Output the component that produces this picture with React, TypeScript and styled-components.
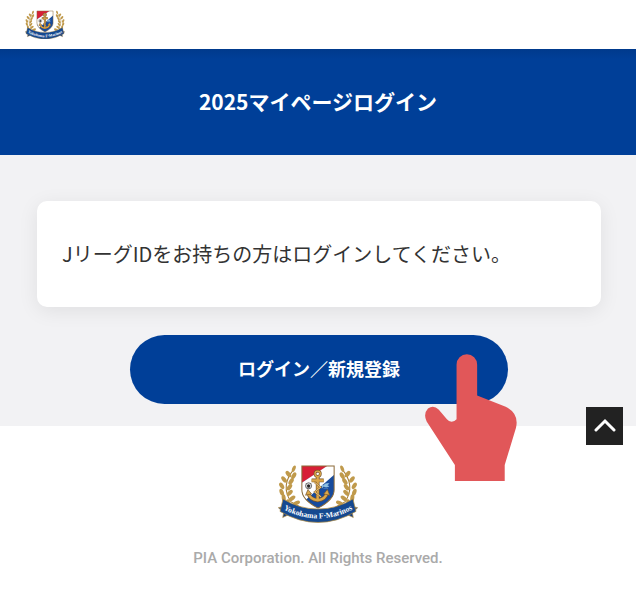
import React from "react";
import styled, { createGlobalStyle } from "styled-components";

const GlobalStyle = createGlobalStyle`
  * { box-sizing: border-box; }
  body {
    margin: 0;
    background: #fff;
    color: #333;
    font-family: "Noto Sans CJK JP", sans-serif;
  }
`;

const Page = styled.div`
  position: relative;
`;

const Header = styled.header`
  display: flex;
  align-items: center;
  height: 49px;
  padding: 0 25px;
`;

const HomeLink = styled.a`
  display: flex;
`;

const CrestSvg = styled.svg<{ $width: number }>`
  display: block;
  width: ${(p) => p.$width}px;
  height: auto;
`;

const Hero = styled.div`
  display: flex;
  align-items: center;
  justify-content: center;
  height: 106px;
  padding-bottom: 2px;
  background: linear-gradient(#003a8c, #003f98 10px);
`;

const Title = styled.h1`
  margin: 0;
  color: #fff;
  font-size: 21px;
  font-weight: 700;
  line-height: 30px;
`;

const Main = styled.main`
  display: flex;
  flex-direction: column;
  align-items: center;
  gap: 28px;
  padding: 46px 35px 22px 37px;
  background: #f2f2f4;
`;

const Card = styled.section`
  width: 100%;
  padding: 38px 25px;
  border-radius: 10px;
  background: #fff;
  box-shadow: 0 4px 20px rgba(0, 0, 0, 0.08);
`;

const Message = styled.p`
  margin: 0;
  font-size: 20px;
  font-weight: 400;
  line-height: 30px;
`;

const LoginArea = styled.div`
  position: relative;
  width: 67%;
`;

const LoginButton = styled.button`
  display: block;
  width: 100%;
  height: 69px;
  padding: 0 0 4px;
  border: 0;
  border-radius: 35px;
  background: #003f98;
  color: #fff;
  font-family: inherit;
  font-size: 18px;
  font-weight: 700;
  cursor: pointer;
`;

const Hand = styled.svg`
  position: absolute;
  top: 19px;
  right: -9px;
  width: 92px;
  height: 127px;
  pointer-events: none;
`;

const TopButton = styled.button`
  position: absolute;
  top: 407px;
  right: 13px;
  display: flex;
  align-items: center;
  justify-content: center;
  width: 37px;
  height: 38px;
  padding: 0 0 2px;
  border: 0;
  background: #222;
  cursor: pointer;
`;

const Footer = styled.footer`
  display: flex;
  flex-direction: column;
  align-items: center;
  gap: 25px;
  padding: 38px 20px;
`;

const Copyright = styled.small`
  color: #aaa;
  font-family: Roboto, sans-serif;
  font-size: 15px;
  font-weight: 500;
  line-height: 20px;
`;

const leaves = [
  [64, 58, -10],
  [51, 74, -8],
  [44, 93, 0],
  [44, 112, 10],
  [50, 129, 22],
  [62, 144, 36],
];

const innerLeaves = [
  [80, 63, 30],
  [72, 80, 34],
  [67, 97, 38],
  [68, 114, 44],
  [75, 130, 54],
  [88, 144, 66],
];

function Branch() {
  return (
    <g fill="#c09a4c">
      <path d="M82 42Q38 92 72 141L103 158" fill="none" stroke="#a77f35" strokeWidth="3" />
      <ellipse cx="80" cy="42" rx="5" ry="10" transform="rotate(22 80 42)" />
      {leaves.map(([x, y, r]) => (
        <ellipse key={y} cx={x} cy={y} rx="6" ry="11" transform={`rotate(${r - 30} ${x} ${y})`} />
      ))}
      {innerLeaves.map(([x, y, r]) => (
        <ellipse key={y} cx={x} cy={y} rx="6" ry="11" transform={`rotate(${r} ${x} ${y})`} />
      ))}
    </g>
  );
}

function Crest({ width, id }: { width: number; id: string }) {
  return (
    <CrestSvg $width={width} viewBox="33 28 238 176" role="img" aria-label="Yokohama F・Marinos">
      <defs>
        <clipPath id={`${id}-shield`}>
          <path d="M104 34H200V105Q200 134 152 159Q104 134 104 105Z" />
        </clipPath>
        <path id={`${id}-line`} d="M44 160Q152 220 260 160" />
      </defs>
      <Branch />
      <g transform="translate(304 0) scale(-1 1)">
        <Branch />
      </g>
      <g clipPath={`url(#${id}-shield)`}>
        <path d="M104 28H200V160H104Z" fill="#174b9d" />
        <path d="M104 28H190L104 84Z" fill="#d71f36" />
        <path d="M200 28V60L111 139L104 111V84L188 28Z" fill="#fff" />
      </g>
      <path
        d="M104 34H200V105Q200 134 152 159Q104 134 104 105Z"
        fill="none"
        stroke="#8b6a38"
        strokeWidth="3"
      />
      <circle cx="124" cy="93" r="9" fill="#fff" stroke="#222" strokeWidth="2" />
      <path d="m124 88 5 4-2 6h-6l-2-6zM116 86l3 3M132 86l-3 3M124 98v4" fill="#222" stroke="#222" />
      <path d="M168 92q6-8 17-6l-5 5 5 4q-9 4-17 0l-4 5v-11zM168 101h14" fill="#8fc0e2" stroke="#8fc0e2" />
      <g fill="none" stroke="#765329" strokeWidth="11" strokeLinejoin="round">
        <circle cx="151" cy="57" r="8" strokeWidth="8" />
        <path d="M151 66V136M133 77H169M123 113Q127 133 151 136Q175 133 179 113" />
      </g>
      <g fill="none" stroke="#dca84a" strokeWidth="7">
        <circle cx="151" cy="57" r="8" strokeWidth="4" />
        <path d="M151 66V136M133 77H169M123 113Q127 133 151 136Q175 133 179 113" />
      </g>
      <path d="m115 121 7-17 11 13zM187 121l-7-17-11 13z" fill="#dca84a" stroke="#765329" strokeWidth="2" />
      <path d="M141 82 160 97 142 111 161 126" fill="none" stroke="#765329" strokeWidth="5" />
      <path d="M141 82 160 97 142 111 161 126" fill="none" stroke="#f0c676" strokeWidth="3" />
      <path
        d="M34 158 56 153 69 177 47 187 50 173ZM270 158 248 153 235 177 257 187 254 173Z"
        fill="#123e83"
        stroke="#b98d3b"
        strokeWidth="2"
      />
      <path
        d="M48 132Q96 162 152 162Q208 162 256 132L265 169Q209 202 152 202Q95 202 39 169Z"
        fill="#154990"
        stroke="#b98d3b"
        strokeWidth="2"
      />
      <text fill="#fff" fontFamily="Liberation Serif, serif" fontSize="23" fontWeight="700">
        <textPath href={`#${id}-line`} startOffset="50%" textAnchor="middle">
          Yokohama F·Marinos
        </textPath>
      </text>
    </CrestSvg>
  );
}

export default function App() {
  return (
    <Page>
      <GlobalStyle />
      <Header>
        <HomeLink href="#">
          <Crest width={40} id="header" />
        </HomeLink>
      </Header>
      <Hero>
        <Title>2025マイページログイン</Title>
      </Hero>
      <Main>
        <Card>
          <Message>JリーグIDをお持ちの方はログインしてください。</Message>
        </Card>
        <LoginArea>
          <LoginButton type="button">ログイン／新規登録</LoginButton>
          <Hand viewBox="45 44 277 380" preserveAspectRatio="none" aria-hidden="true">
            <path
              d="M140 76A31 31 0 0 1 202 76V168L288 202Q329 222 319 265L285 376V424H135V376L50 246Q39 223 54 207Q71 196 86 210L111 239Q125 255 140 239Z"
              fill="#e15759"
            />
          </Hand>
        </LoginArea>
      </Main>
      <Footer>
        <Crest width={80} id="footer" />
        <Copyright>PIA Corporation. All Rights Reserved.</Copyright>
      </Footer>
      <TopButton type="button" aria-label="ページの先頭へ">
        <svg width="22" height="14" viewBox="0 0 22 14" aria-hidden="true">
          <path d="M2 12 11 3 20 12" fill="none" stroke="#fff" strokeWidth="3" strokeLinecap="round" />
        </svg>
      </TopButton>
    </Page>
  );
}
